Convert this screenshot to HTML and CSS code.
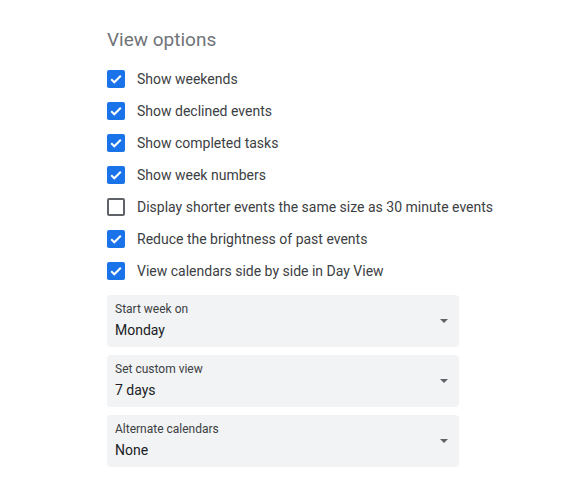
FILE: index.html
```html
<!DOCTYPE html>
<html>
<head>
<meta charset="utf-8">
<link rel="stylesheet" href="styles.css">
</head>
<body>
<div class="panel">
  <h2 class="title">View options</h2>
  <ul class="checks">
    <li class="row"><span class="box on"><svg viewBox="0 0 18 18"><path d="M4.2 9.2l3.1 3.1 6.5-6.6" /></svg></span><span class="lbl">Show weekends</span></li>
    <li class="row"><span class="box on"><svg viewBox="0 0 18 18"><path d="M4.2 9.2l3.1 3.1 6.5-6.6" /></svg></span><span class="lbl">Show declined events</span></li>
    <li class="row"><span class="box on"><svg viewBox="0 0 18 18"><path d="M4.2 9.2l3.1 3.1 6.5-6.6" /></svg></span><span class="lbl">Show completed tasks</span></li>
    <li class="row"><span class="box on"><svg viewBox="0 0 18 18"><path d="M4.2 9.2l3.1 3.1 6.5-6.6" /></svg></span><span class="lbl">Show week numbers</span></li>
    <li class="row"><span class="box off"></span><span class="lbl">Display shorter events the same size as 30 minute events</span></li>
    <li class="row"><span class="box on"><svg viewBox="0 0 18 18"><path d="M4.2 9.2l3.1 3.1 6.5-6.6" /></svg></span><span class="lbl">Reduce the brightness of past events</span></li>
    <li class="row"><span class="box on"><svg viewBox="0 0 18 18"><path d="M4.2 9.2l3.1 3.1 6.5-6.6" /></svg></span><span class="lbl">View calendars side by side in Day View</span></li>
  </ul>
  <div class="selects">
    <div class="select"><div class="stext"><div class="slabel">Start week on</div><div class="svalue">Monday</div></div><span class="arrow"></span></div>
    <div class="select"><div class="stext"><div class="slabel">Set custom view</div><div class="svalue">7 days</div></div><span class="arrow"></span></div>
    <div class="select"><div class="stext"><div class="slabel">Alternate calendars</div><div class="svalue">None</div></div><span class="arrow"></span></div>
  </div>
</div>
</body>
</html>
```
FILE: styles.css
```css
html, body { margin: 0; padding: 0; background: #fff; }
body { font-family: Roboto, "Liberation Sans", sans-serif; }
.panel { padding: 28px 0 0 107px; width: 352px; }
.title { margin: 0; font-weight: 400; font-size: 19px; line-height: 24px; color: #6f7378; }
.checks { list-style: none; margin: 18px 0 0 0; padding: 0; display: flex; flex-direction: column; gap: 14px; }
.row { display: flex; align-items: center; height: 18px; }
.box { width: 18px; height: 18px; box-sizing: border-box; border-radius: 2px; flex: none; display: block; }
.box.on { background: #1a73e8; }
.box.off { border: 2px solid #5f6368; }
.box svg { width: 18px; height: 18px; display: block; fill: none; stroke: #fff; stroke-width: 2; }
.lbl { margin-left: 12px; font-size: 14px; color: #3c4043; white-space: nowrap; }
.selects { margin-top: 15px; display: flex; flex-direction: column; gap: 8px; }
.select { height: 52px; background: #f1f3f4; border-radius: 4px; display: flex; align-items: center; padding: 0 11px 0 8px; }
.stext { flex: 1; }
.slabel { font-size: 12px; line-height: 16px; color: #3c4043; }
.svalue { font-size: 14px; line-height: 22px; margin-top: 2px; color: #202124; }
.arrow { width: 0; height: 0; border-left: 4px solid transparent; border-right: 4px solid transparent; border-top: 4px solid #5f6368; }
```
